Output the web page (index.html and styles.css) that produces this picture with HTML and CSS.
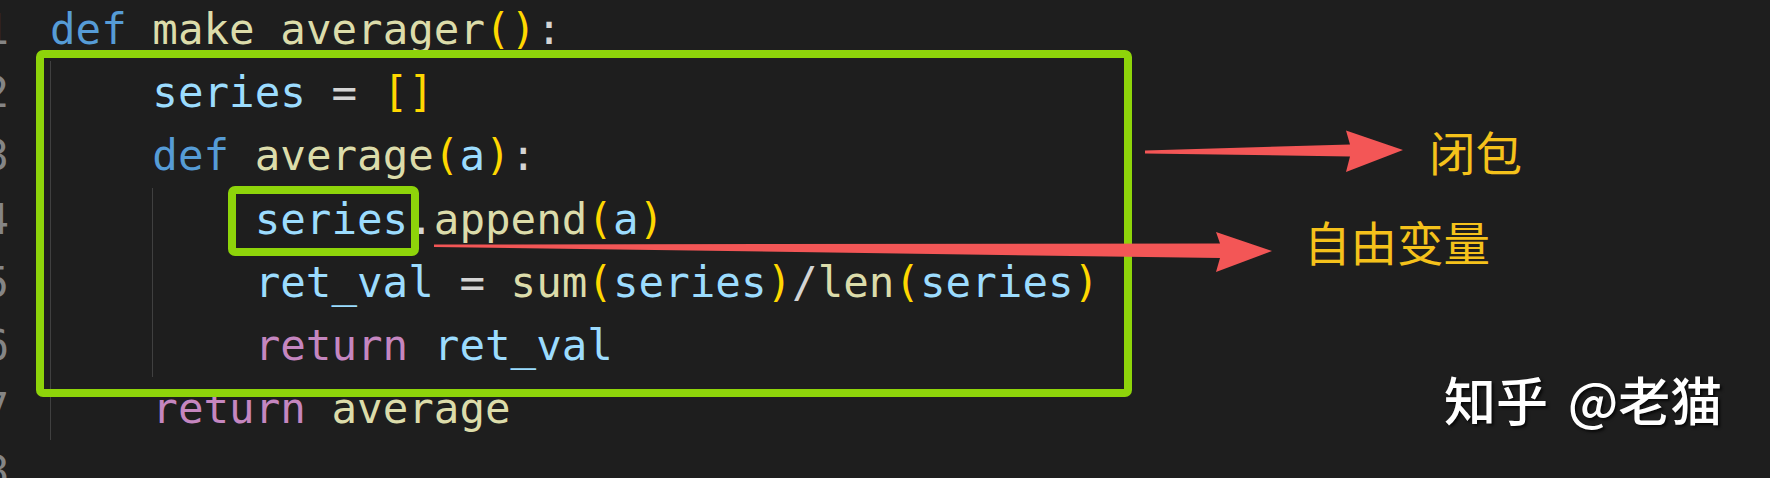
FILE: index.html
```html
<!DOCTYPE html>
<html lang="zh-CN">
<head>
<meta charset="utf-8">
<title>closure</title>
<link rel="stylesheet" href="styles.css">
</head>
<body>
<div class="stage">
  <div class="editor">
    <div class="gutter">
      <div class="ln"><span>1</span></div>
      <div class="ln"><span>2</span></div>
      <div class="ln"><span>3</span></div>
      <div class="ln"><span>4</span></div>
      <div class="ln"><span>5</span></div>
      <div class="ln"><span>6</span></div>
      <div class="ln"><span>7</span></div>
      <div class="ln"><span>8</span></div>
    </div>
    <div class="code">
      <div class="line"><span class="t"><span class="kw">def</span> <span class="fn">make_averager</span><span class="br">()</span><span class="op">:</span></span></div>
      <div class="line"><span class="ind"></span><span class="t"><span class="var">series</span> <span class="op">=</span> <span class="br">[]</span></span></div>
      <div class="line"><span class="ind"></span><span class="t"><span class="kw">def</span> <span class="fn">average</span><span class="br">(</span><span class="var">a</span><span class="br">)</span><span class="op">:</span></span></div>
      <div class="line"><span class="ind"></span><span class="ind"></span><span class="t"><span class="var">series</span><span class="op">.</span><span class="fn">append</span><span class="br">(</span><span class="var">a</span><span class="br">)</span></span></div>
      <div class="line"><span class="ind"></span><span class="ind"></span><span class="t"><span class="var">ret_val</span> <span class="op">=</span> <span class="fn">sum</span><span class="br">(</span><span class="var">series</span><span class="br">)</span><span class="op">/</span><span class="fn">len</span><span class="br">(</span><span class="var">series</span><span class="br">)</span></span></div>
      <div class="line"><span class="ind"></span><span class="ind"></span><span class="t"><span class="ctl">return</span> <span class="var">ret_val</span></span></div>
      <div class="line"><span class="ind"></span><span class="t"><span class="ctl">return</span> <span class="fn">average</span></span></div>
      <div class="line"><span class="t"></span></div>
    </div>
  </div>

  <svg class="marks" width="1770" height="478" viewBox="0 0 1770 478" xmlns="http://www.w3.org/2000/svg">
    <rect class="box" x="40" y="54" width="1088" height="339" rx="3"/>
    <rect class="box" x="232" y="190" width="183" height="62" rx="3"/>
    <polygon class="arrow" points="1145,150.5 1350,144.5 1346,130.5 1403,150 1346,172 1350,156.5 1145,153.5"/>
    <polygon class="arrow" points="434,244.5 1220,243.5 1216,232 1272,251 1216,272 1220,258 434,247"/>
  </svg>

  <div class="label label-closure">闭包</div>
  <div class="label label-free">自由变量</div>
  <div class="watermark">知乎 @老猫</div>
</div>
</body>
</html>
```

FILE: styles.css
```css
html, body {
  margin: 0;
  padding: 0;
  background: #1e1e1e;
}

.stage {
  position: relative;
  width: 1770px;
  height: 478px;
  overflow: hidden;
  background: #1e1e1e;
}

.editor {
  display: flex;
  margin-top: -2px;
  font-family: "DejaVu Sans Mono", "Liberation Mono", monospace;
  font-size: 42.5px;
}

.gutter {
  width: 9px;
  overflow: hidden;
  flex: none;
  color: #858585;
}

.ln {
  display: flex;
  justify-content: flex-end;
  height: 63.2px;
  line-height: 63.2px;
}

.ln span {
  flex: none;
}

.code {
  margin-left: 41px;
  color: #d4d4d4;
}

.line {
  display: flex;
  height: 63.2px;
  line-height: 63.2px;
  white-space: pre;
}

.ind {
  width: 4ch;
  flex: none;
  box-shadow: inset 1px 0 0 #404040;
}

.t {
  flex: none;
}

.kw { color: #569cd6; }
.fn { color: #dcdcaa; }
.var { color: #9cdcfe; }
.br { color: #ffd700; }
.op { color: #d4d4d4; }
.ctl { color: #c586c0; }

.marks {
  position: absolute;
  left: 0;
  top: 0;
  pointer-events: none;
}

.box {
  fill: none;
  stroke: #8ed40a;
  stroke-width: 8;
}

.arrow {
  fill: #f35656;
}

.label {
  position: absolute;
  font-family: "Noto Sans CJK SC", sans-serif;
  font-size: 46.5px;
  line-height: 1;
  color: #f5c21b;
}

.label-closure {
  left: 1429px;
  top: 128px;
}

.label-free {
  left: 1304px;
  top: 218px;
}

.watermark {
  position: absolute;
  left: 1444px;
  top: 373px;
  font-family: "Noto Sans CJK SC", sans-serif;
  font-size: 52px;
  font-weight: 500;
  line-height: 1;
  color: #ffffff;
  word-spacing: 8px;
  text-shadow: 2px 2px 3px rgba(0, 0, 0, 0.75);
}
```
